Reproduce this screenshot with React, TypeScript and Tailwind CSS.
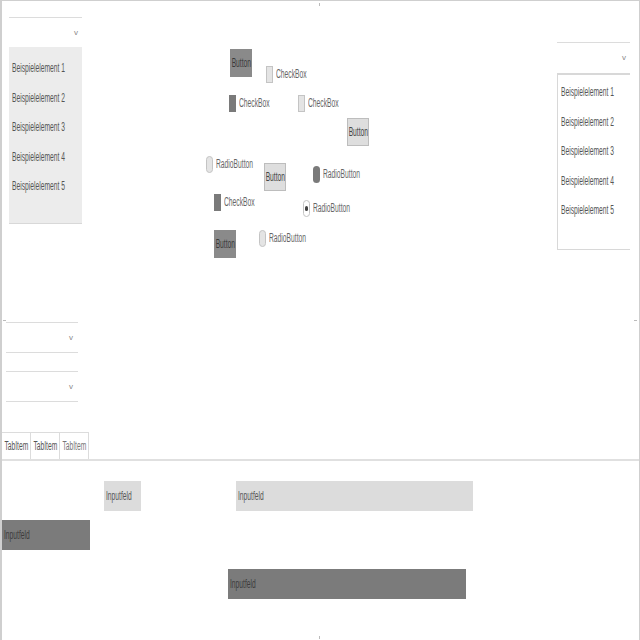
import React from "react";

// Designer canvas: every widget sits at its own spot, so positions are data.
// The captured UI font is a narrow one; Liberation Sans squeezed horizontally stands in for it.
const items = ["Beispielelement 1", "Beispielelement 2", "Beispielelement 3", "Beispielelement 4", "Beispielelement 5"];

function Narrow({ children, center }: { children: React.ReactNode; center?: boolean }) {
  return (
    <span
      className={`inline-block whitespace-nowrap scale-x-[0.56] ${center ? "origin-center" : "origin-left"}`}
    >
      {children}
    </span>
  );
}

function Chevron() {
  return <span className="text-[8px] leading-none text-[#888]">v</span>;
}

function Btn({ x, y, dark }: { x: number; y: number; dark?: boolean }) {
  return (
    <div
      className={`absolute flex h-[28px] w-[22px] items-center justify-center overflow-hidden text-[12px] ${
        dark ? "bg-[#8a8a8a] text-[#3a3a3a]" : "border border-[#bdbdbd] bg-[#dedede] text-[#444]"
      }`}
      style={{ left: x, top: y }}
    >
      <Narrow center>Button</Narrow>
    </div>
  );
}

function Check({ x, y, dark }: { x: number; y: number; dark?: boolean }) {
  return (
    <div className="absolute flex items-center gap-[3px]" style={{ left: x, top: y }}>
      <span
        className={`h-[17px] w-[7px] ${dark ? "bg-[#7a7a7a]" : "border border-[#c4c4c4] bg-[#e4e4e4]"}`}
      />
      <span className="text-[12px] text-[#666]">
        <Narrow>CheckBox</Narrow>
      </span>
    </div>
  );
}

function Radio({ x, y, kind }: { x: number; y: number; kind: "light" | "dark" | "checked" }) {
  const dot =
    kind === "dark"
      ? "bg-[#7a7a7a]"
      : kind === "checked"
        ? "border border-[#c4c4c4] bg-white"
        : "border border-[#c4c4c4] bg-[#e4e4e4]";
  return (
    <div className="absolute flex items-center gap-[3px]" style={{ left: x, top: y }}>
      <span className={`flex h-[17px] w-[7px] items-center justify-center rounded-full ${dot}`}>
        {kind === "checked" && <span className="h-[5px] w-[3px] rounded-full bg-[#444]" />}
      </span>
      <span className="text-[12px] text-[#666]">
        <Narrow>RadioButton</Narrow>
      </span>
    </div>
  );
}

function Input({ x, y, w, dark }: { x: number; y: number; w: number; dark?: boolean }) {
  return (
    <div
      className={`absolute flex h-[30px] items-center overflow-hidden px-[2px] text-[12px] ${
        dark ? "bg-[#7b7b7b] text-[#3c3c3c]" : "bg-[#dcdcdc] text-[#555]"
      }`}
      style={{ left: x, top: y, width: w }}
    >
      <Narrow>Inputfeld</Narrow>
    </div>
  );
}

function Combo({ x, y, w }: { x: number; y: number; w: number }) {
  return (
    <div
      className="absolute flex h-[31px] items-center justify-end border-t border-b border-[#dcdcdc] bg-white pr-[5px]"
      style={{ left: x, top: y, width: w }}
    >
      <Chevron />
    </div>
  );
}

function OpenCombo({ className, listClass }: { className: string; listClass: string }) {
  return (
    <div className={`absolute w-[73px] ${className}`}>
      <div className="flex h-[30px] items-center justify-end border-t border-[#dcdcdc] bg-white pr-[4px]">
        <Chevron />
      </div>
      <div className={`flex h-[177px] flex-col gap-[11.5px] px-[3px] text-[12px] text-[#555] ${listClass}`}>
        {items.map((t) => (
          <div key={t} className="h-[18px] leading-[18px]">
            <Narrow>{t}</Narrow>
          </div>
        ))}
      </div>
    </div>
  );
}

export default function App() {
  return (
    <div className="relative h-[640px] w-[640px] overflow-hidden border-t border-l-2 border-r border-[#cfcfcf] bg-white font-['Liberation_Sans',Arial,sans-serif]">
      <OpenCombo className="left-[7px] top-[16px]" listClass="pt-[12px] border-b border-[#d8d8d8] bg-[#ececec]" />
      <OpenCombo
        className="left-[555px] top-[41px]"
        listClass="mt-[1px] pt-[8px] border-t-2 border-b border-l border-[#d8d8d8] bg-white"
      />

      <Btn x={228} y={48} dark />
      <Btn x={345} y={117} />
      <Btn x={262} y={162} />
      <Btn x={212} y={229} dark />

      <Check x={264} y={64} />
      <Check x={227} y={93} dark />
      <Check x={296} y={93} />
      <Check x={212} y={192} dark />

      <Radio x={204} y={154} kind="light" />
      <Radio x={311} y={164} kind="dark" />
      <Radio x={301} y={198} kind="checked" />
      <Radio x={257} y={228} kind="light" />

      <Combo x={4} y={321} w={72} />
      <Combo x={4} y={370} w={72} />

      {/* tab strip */}
      <div className="absolute left-0 top-[431px] flex h-[29px] w-[640px] border-b-2 border-[#e0e0e0] text-[12px] text-[#555]">
        {["TabItem", "TabItem", "TabItem"].map((t, i) => (
          <div
            key={i}
            className={`flex w-[29px] items-center justify-center border-t border-r border-[#dcdcdc] ${
              i === 2 ? "text-[#777]" : ""
            }`}
          >
            <Narrow center>{t}</Narrow>
          </div>
        ))}
      </div>

      <Input x={102} y={480} w={37} />
      <Input x={234} y={480} w={237} />
      <Input x={0} y={519} w={88} dark />
      <Input x={226} y={568} w={238} dark />

      {/* resize handles */}
      <span className="absolute left-[317px] top-[2px] h-[3px] w-[1px] bg-[#bbb]" />
      <span className="absolute left-[317px] top-[635px] h-[3px] w-[1px] bg-[#bbb]" />
      <span className="absolute left-[1px] top-[319px] h-[1px] w-[3px] bg-[#bbb]" />
      <span className="absolute left-[632px] top-[319px] h-[1px] w-[3px] bg-[#bbb]" />
    </div>
  );
}
